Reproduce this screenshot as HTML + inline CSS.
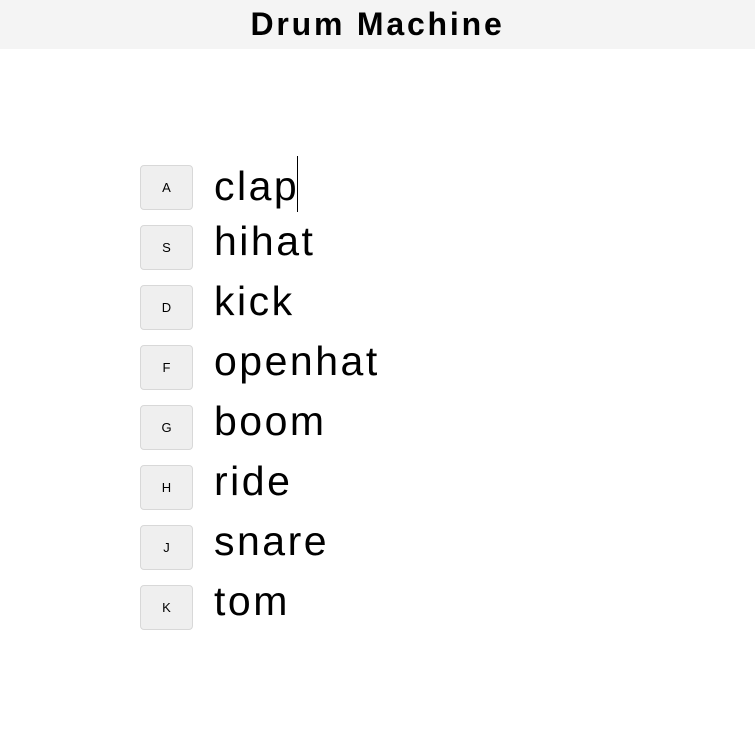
<!DOCTYPE html><html><head><style>
body{margin:0;width:755px;height:742px;background:#fff;font-family:"Liberation Sans",sans-serif;overflow:hidden}
.h{height:49px;background:#f4f4f4;text-align:center;font-weight:bold;font-size:32px;letter-spacing:2.8px;line-height:48px;color:#000}
.row{position:absolute;left:140px;height:60px}
.b{position:absolute;left:0;top:0;width:51px;height:43px;border:1px solid #d8d8d8;border-radius:4px;background:#efefef;font-size:13px;text-align:center;line-height:43px}
.t{position:absolute;left:74px;top:-9px;font-size:41px;letter-spacing:2.5px;line-height:50px;white-space:nowrap}
</style></head><body>
<div class="h">Drum Machine</div>
<div class="row" style="top:165px"><div class="b">A</div><div class="t">clap<span style="display:inline-block;width:1px;height:56px;background:#000;vertical-align:-12px;margin-left:-2px"></span></div></div>
<div class="row" style="top:225px"><div class="b">S</div><div class="t">hihat</div></div>
<div class="row" style="top:285px"><div class="b">D</div><div class="t">kick</div></div>
<div class="row" style="top:345px"><div class="b">F</div><div class="t">openhat</div></div>
<div class="row" style="top:405px"><div class="b">G</div><div class="t">boom</div></div>
<div class="row" style="top:465px"><div class="b">H</div><div class="t">ride</div></div>
<div class="row" style="top:525px"><div class="b">J</div><div class="t">snare</div></div>
<div class="row" style="top:585px"><div class="b">K</div><div class="t">tom</div></div>
</body></html>
